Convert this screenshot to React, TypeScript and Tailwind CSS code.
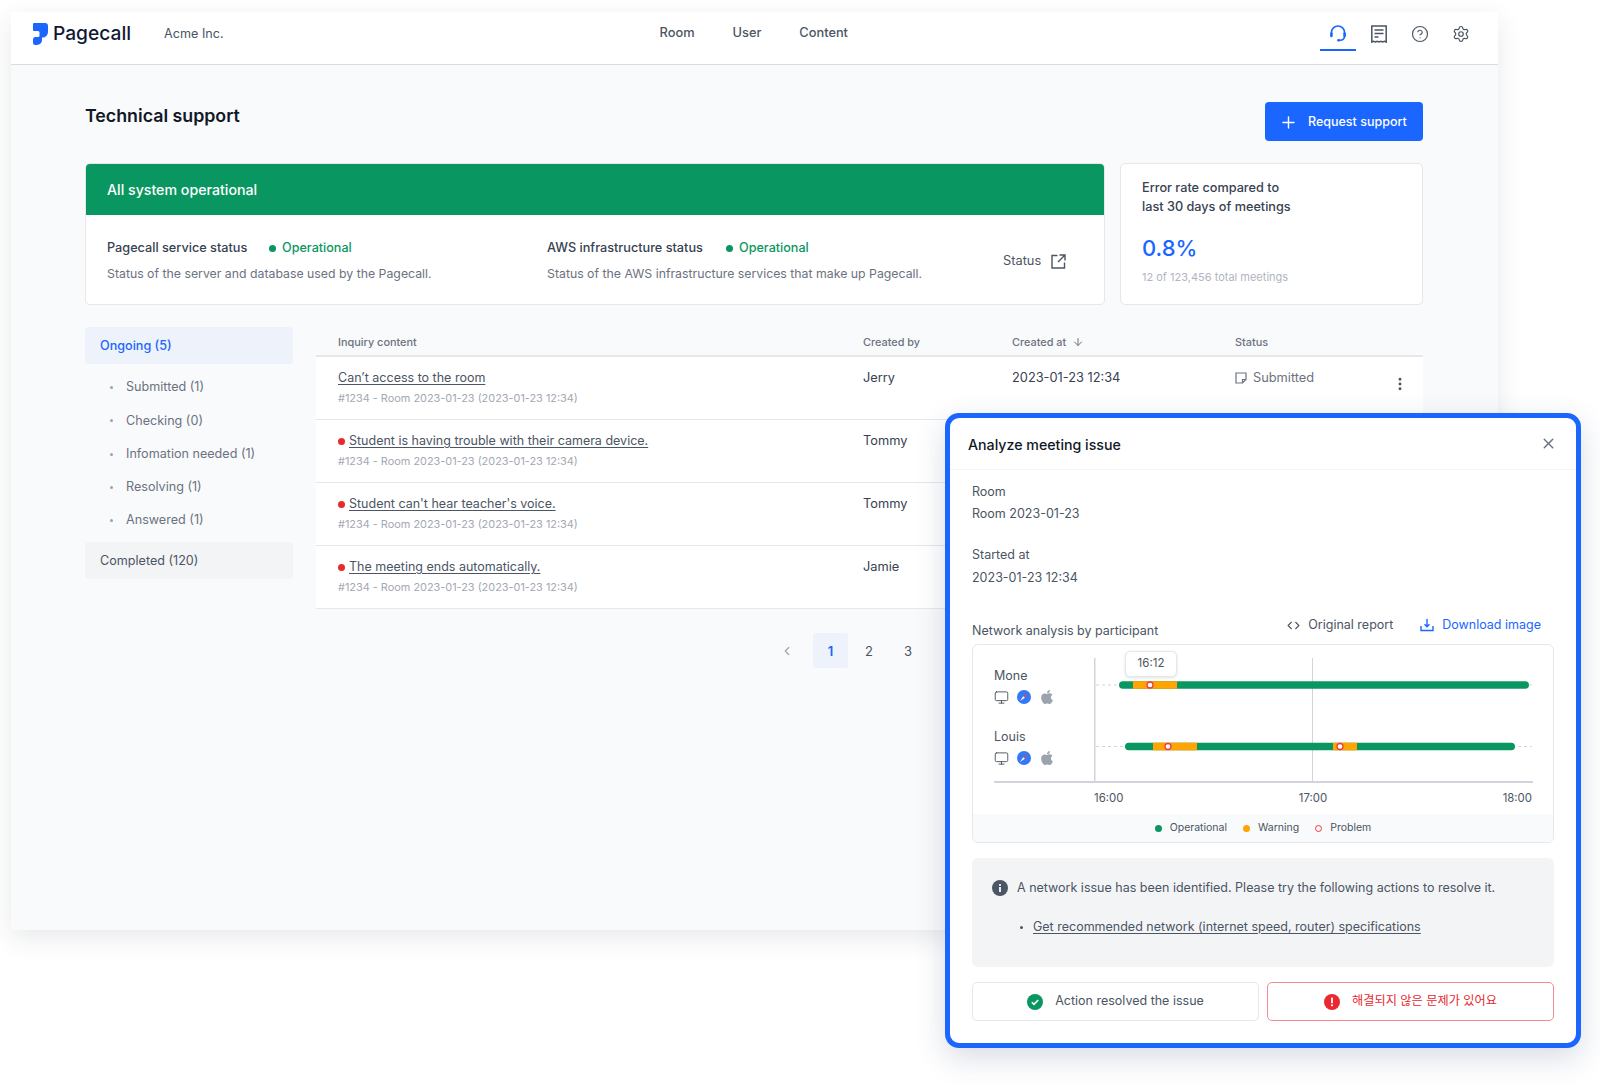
import { ArrowDown, ChevronLeft, ChevronRight, CircleHelp, Code, EllipsisVertical, Monitor, Plus, Settings, X } from "lucide-react";
import { FaApple } from "react-icons/fa";

// only the first row shows its date and status, the panel covers the others
const inquiries = [
  { title: "Can’t access to the room", by: "Jerry", alert: false },
  { title: "Student is having trouble with their camera device.", by: "Tommy", alert: true },
  { title: "Student can't hear teacher's voice.", by: "Tommy", alert: true },
  { title: "The meeting ends automatically.", by: "Jamie", alert: true },
];

const subItems = ["Submitted (1)", "Checking (0)", "Infomation needed (1)", "Resolving (1)", "Answered (1)"];

function Logo() {
  return (
    <svg width="15" height="22" viewBox="0 0 15 22" fill="#1a66ff">
      <path d="M0 1a1 1 0 0 1 1-1H12a3 3 0 0 1 3 3V9a5.5 5.5 0 0 1-5.5 5.5H9V17a5 5 0 0 1-5 5H2.5A2.5 2.5 0 0 1 0 19.5V16.5A2.5 2.5 0 0 1 2.5 14H5a1.5 1.5 0 0 0 1.5-1.5V9.5A1.5 1.5 0 0 0 5 8H1a1 1 0 0 1-1-1Z" />
    </svg>
  );
}

function HeadsetIcon() {
  return (
    <svg width="18" height="18" viewBox="0 0 18 18" fill="none" stroke="#1a66ff" strokeWidth="1.6" strokeLinecap="round">
      <path d="M2.5 10V8.5a6.5 6.5 0 0 1 13 0V10" />
      <path d="M2.4 9.5v2.5M15.6 9.5v2.5" strokeWidth="2.6" />
      <path d="M15.5 12.5a4 4 0 0 1-4.5 3.7" />
      <path d="M9.5 16.2h.4" strokeWidth="2.6" />
    </svg>
  );
}

function ReceiptIcon() {
  return (
    <svg width="18" height="18" viewBox="0 0 18 18" fill="none" stroke="#4b5563" strokeWidth="1.5">
      <path d="M1.8 17V1h14.4v16l-1.8-.8-1.8.8-1.8-.8-1.8.8-1.8-.8-1.8.8-1.8-.8z" />
      <path d="M4.5 5h9M4.5 8.5h9M4.5 12h4" />
    </svg>
  );
}

function ExternalIcon() {
  return (
    <svg width="15" height="15" viewBox="0 0 15 15" fill="none" stroke="#4b5563" strokeWidth="1.4">
      <path d="M6.5 1.5H1v12.5h12.5V8.5" />
      <path d="M8.5 1h5.5v5.5M14 1 7 8" />
    </svg>
  );
}

function NoteIcon() {
  return (
    <svg width="12" height="12" viewBox="0 0 12 12" fill="none" stroke="#6b7280" strokeWidth="1.2">
      <path d="M1 1h10v6.5L7.5 11H1z" />
      <path d="M7.5 11V7.5H11" />
    </svg>
  );
}

function DownloadIcon() {
  return (
    <svg width="14" height="14" viewBox="0 0 14 14" fill="none" stroke="#1a66ff" strokeWidth="1.4">
      <path d="M1 8v4.5h12V8" />
      <path d="M7 1v7.5M4.5 6.2 7 8.7l2.5-2.5" />
    </svg>
  );
}

function SafariIcon() {
  return (
    <svg width="14" height="14" viewBox="0 0 14 14">
      <circle cx="7" cy="7" r="7" fill="#3478f6" />
      <path d="M11 3 6.2 6.2 7.8 7.8z" fill="#ef4444" />
      <path d="M3 11 6.2 6.2 7.8 7.8z" fill="#ffffff" />
    </svg>
  );
}

function InfoIcon() {
  return (
    <svg width="16" height="16" viewBox="0 0 16 16">
      <circle cx="8" cy="8" r="8" fill="#4b5563" />
      <rect x="7.1" y="7" width="1.8" height="5" fill="#ffffff" />
      <rect x="7.1" y="4" width="1.8" height="1.8" fill="#ffffff" />
    </svg>
  );
}

function CheckIcon() {
  return (
    <svg width="16" height="16" viewBox="0 0 16 16" fill="none">
      <circle cx="8" cy="8" r="8" fill="#0a9660" />
      <path d="M4.8 8.2 7 10.4l4.2-4.4" stroke="#ffffff" strokeWidth="1.6" />
    </svg>
  );
}

function AlertIcon() {
  return (
    <svg width="16" height="16" viewBox="0 0 16 16">
      <circle cx="8" cy="8" r="8" fill="#e9282f" />
      <rect x="7.1" y="3.6" width="1.8" height="5.6" fill="#ffffff" />
      <rect x="7.1" y="10.4" width="1.8" height="1.8" fill="#ffffff" />
    </svg>
  );
}

// bars of the network timeline, coordinates are relative to the vertical axis
function TimelineBars() {
  return (
    <svg width="438" height="124" viewBox="0 0 438 124" fill="none">
      <line x1="0.75" y1="0" x2="0.75" y2="124" stroke="#d1d5db" strokeWidth="1.5" />
      <line x1="218.5" y1="0" x2="218.5" y2="124" stroke="#d1d5db" />
      <line x1="2" y1="27" x2="25" y2="27" stroke="#d1d5db" strokeDasharray="3 3" />
      <line x1="435" y1="27" x2="438" y2="27" stroke="#d1d5db" strokeDasharray="3 3" />
      <line x1="2" y1="88.5" x2="31" y2="88.5" stroke="#d1d5db" strokeDasharray="3 3" />
      <line x1="424" y1="88.5" x2="438" y2="88.5" stroke="#d1d5db" strokeDasharray="3 3" />
      <rect x="25" y="23.2" width="410" height="7.6" rx="3.8" fill="#0a9660" />
      <rect x="39" y="23.2" width="44" height="7.6" fill="#ffa400" />
      <circle cx="56" cy="27" r="3" fill="#ffffff" stroke="#f03a45" strokeWidth="1.3" />
      <rect x="31" y="84.7" width="390" height="7.6" rx="3.8" fill="#0a9660" />
      <rect x="59" y="84.7" width="44" height="7.6" fill="#ffa400" />
      <rect x="239" y="84.7" width="24" height="7.6" fill="#ffa400" />
      <circle cx="74" cy="88.5" r="3" fill="#ffffff" stroke="#f03a45" strokeWidth="1.3" />
      <circle cx="246" cy="88.5" r="3" fill="#ffffff" stroke="#f03a45" strokeWidth="1.3" />
    </svg>
  );
}

function Participant({ name }: { name: string }) {
  return (
    <div className="h-[61px]">
      <p className="text-[12.5px] leading-[20px] text-[#4b5563]">{name}</p>
      <div className="mt-[3px] flex items-center gap-[8px]">
        <Monitor size={15} color="#4b5563" strokeWidth={1.5} />
        <SafariIcon />
        <FaApple size={16} color="#9ca3af" />
      </div>
    </div>
  );
}

function AnalyzePanel() {
  return (
    <div className="absolute left-[945px] top-[413px] flex h-[635px] w-[636px] flex-col rounded-[14px] border-[5px] border-[#1a66ff] bg-white shadow-[0_10px_30px_rgba(40,60,110,0.18)]">
      <div className="flex h-[52px] shrink-0 items-center justify-between border-b border-[#f3f4f6] pl-[18px] pr-[19px]">
        <h2 className="mt-[2px] text-[14.2px] font-medium text-[#111827]">Analyze meeting issue</h2>
        <X size={17} color="#6b7280" />
      </div>

      <div className="flex flex-1 flex-col px-[22px] text-[12.5px] text-[#4b5563]">
        <p className="mt-[12px] leading-[20px]">Room</p>
        <p className="mt-[2px] leading-[20px]">Room 2023-01-23</p>
        <p className="mt-[21px] leading-[20px]">Started at</p>
        <p className="mt-[3px] leading-[20px]">2023-01-23 12:34</p>

        <div className="mt-[27px] flex h-[29px] items-start justify-between pr-[13px]">
          <p className="mt-[6px] leading-[20px]">Network analysis by participant</p>
          <div className="flex items-center gap-[27px] leading-[20px]">
            <span className="flex items-center gap-[8px]">
              <Code size={13} color="#4b5563" />
              Original report
            </span>
            <span className="flex items-center gap-[8px] text-[#1a66ff]">
              <DownloadIcon />
              Download image
            </span>
          </div>
        </div>

        <div className="relative flex h-[199px] flex-col overflow-hidden rounded-[6px] border-[1.5px] border-[#e5e7eb]">
          <div className="flex flex-1 pl-[21px] pt-[13px]">
            <div className="w-[100px] shrink-0 pt-[8px]">
              <Participant name="Mone" />
              <Participant name="Louis" />
            </div>
            <div>
              <TimelineBars />
              <div className="flex w-[438px] justify-between pt-[8px] text-[11.4px] leading-[16px] text-[#4b5563]">
                <span>16:00</span>
                <span>17:00</span>
                <span>18:00</span>
              </div>
            </div>
          </div>
          <div className="absolute left-[21px] right-[20px] top-[136px] h-[2px] bg-[#d1d5db]" />
          <div className="absolute left-[152px] top-[6px] flex h-[26px] w-[52px] items-center justify-center rounded-[5px] border border-[#e5e7eb] bg-white text-[11.5px] text-[#4b5563] shadow-[0_1px_3px_rgba(0,0,0,0.12)]">
            16:12
          </div>
          <div className="flex h-[28px] shrink-0 items-center justify-center gap-[16px] bg-[#f9fafb] text-[10.5px] text-[#4b5563]">
            <span className="flex items-center gap-[8px]">
              <span className="h-[7px] w-[7px] rounded-full bg-[#0a9660]" />
              Operational
            </span>
            <span className="flex items-center gap-[8px]">
              <span className="h-[7px] w-[7px] rounded-full bg-[#ffa400]" />
              Warning
            </span>
            <span className="flex items-center gap-[8px]">
              <span className="h-[7px] w-[7px] rounded-full border border-[#f03a45]" />
              Problem
            </span>
          </div>
        </div>

        <div className="mt-[15px] h-[109px] rounded-[6px] bg-[#f3f4f6] pl-[20px] pt-[20px]">
          <div className="flex items-center gap-[9px] leading-[20px]">
            <InfoIcon />
            <span>A network issue has been identified. Please try the following actions to resolve it.</span>
          </div>
          <div className="mt-[19px] flex items-center gap-[10px] pl-[28px] leading-[20px]">
            <span className="h-[3px] w-[3px] rounded-full bg-[#4b5563]" />
            <span className="underline underline-offset-2">Get recommended network (internet speed, router) specifications</span>
          </div>
        </div>

        <div className="mt-[15px] grid h-[39px] grid-cols-2 gap-[8px]">
          <button className="flex items-center justify-center gap-[12px] rounded-[5px] border-[1.5px] border-[#e5e7eb] bg-white text-[#4b5563]">
            <CheckIcon />
            Action resolved the issue
          </button>
          <button className="flex items-center justify-center gap-[12px] rounded-[5px] border-[1.5px] border-[#f8898f] bg-white text-[12.2px] text-[#e9282f]">
            <AlertIcon />
            해결되지 않은 문제가 있어요
          </button>
        </div>
      </div>
    </div>
  );
}

export default function App() {
  return (
    <div className="relative h-[1086px] w-[1600px] overflow-hidden bg-white pl-[11px] pt-[12px] font-['Inter','Noto_Sans_CJK_KR',sans-serif]">
      <div className="h-[918px] w-[1487px] bg-[#f9fafb] shadow-[0_8px_24px_rgba(30,41,59,0.1)]">
        {/* Header */}
        <header className="flex h-[53px] items-center border-b border-[#d9dce1] bg-white pb-[9px]">
          <div className="ml-[22px] flex items-center gap-[5px]">
            <Logo />
            <span className="text-[19.2px] font-medium leading-none text-[#111834]">Pagecall</span>
          </div>
          <span className="ml-[33px] mt-[1px] text-[12.6px] text-[#4b5563]">Acme Inc.</span>
          <nav className="ml-[436px] flex gap-[38px] pb-[2px] text-[12.8px] font-medium text-[#4b5563]">
            <span>Room</span>
            <span>User</span>
            <span>Content</span>
          </nav>
          <div className="ml-auto mr-[28px] flex items-center">
            <div className="flex h-[35px] w-[36px] items-center justify-center border-b-2 border-[#1a66ff]">
              <HeadsetIcon />
            </div>
            <div className="ml-[14px] flex w-[18px] justify-center">
              <ReceiptIcon />
            </div>
            <div className="ml-[23px] flex w-[18px] justify-center">
              <CircleHelp size={18} color="#4b5563" strokeWidth={1.6} />
            </div>
            <div className="ml-[23px] flex w-[18px] justify-center">
              <Settings size={18} color="#4b5563" strokeWidth={1.6} />
            </div>
          </div>
        </header>

        <main className="pl-[74px] pr-[75px]">
          <div className="flex h-[98px] items-start justify-between pt-[37px]">
            <h1 className="mt-[1px] text-[17.8px] font-semibold leading-[26px] text-[#111827]">Technical support</h1>
            <button className="flex h-[39px] w-[158px] items-center gap-[10px] rounded-[4px] bg-[#1a66ff] pl-[14px] pt-[1px] text-[12.5px] font-medium text-white">
              <Plus size={19} strokeWidth={1.8} />
              Request support
            </button>
          </div>

          {/* Status cards */}
          <div className="flex gap-[15px]">
            <section className="h-[142px] w-[1020px] overflow-hidden rounded-[5px] border-[1.5px] border-[#e5e7eb] bg-white">
              <div className="flex h-[51px] items-center bg-[#0a9660] pl-[21px] text-[14.2px] font-medium text-white">
                All system operational
              </div>
              <div className="flex pl-[21px] pt-[23px] text-[12.3px]">
                <div className="w-[440px]">
                  <div className="flex items-center leading-[20px]">
                    <span className="w-[162px] text-[12.7px] font-medium text-[#374151]">Pagecall service status</span>
                    <span className="h-[7px] w-[7px] rounded-full bg-[#0a9660]" />
                    <span className="ml-[6px] text-[12.6px] font-medium text-[#0a9660]">Operational</span>
                  </div>
                  <p className="mt-[6px] leading-[20px] text-[#6b7280]">Status of the server and database used by the Pagecall.</p>
                </div>
                <div className="w-[456px]">
                  <div className="flex items-center leading-[20px]">
                    <span className="w-[179px] text-[12.7px] font-medium text-[#374151]">AWS infrastructure status</span>
                    <span className="h-[7px] w-[7px] rounded-full bg-[#0a9660]" />
                    <span className="ml-[6px] text-[12.6px] font-medium text-[#0a9660]">Operational</span>
                  </div>
                  <p className="mt-[6px] leading-[20px] text-[#6b7280]">Status of the AWS infrastructure services that make up Pagecall.</p>
                </div>
                <div className="flex h-[32px] items-center gap-[10px] pt-[14px] text-[12.8px] text-[#4b5563]">
                  Status
                  <ExternalIcon />
                </div>
              </div>
            </section>

            <section className="h-[142px] w-[303px] rounded-[5px] border-[1.5px] border-[#e5e7eb] bg-white pl-[21px] pt-[15px]">
              <p className="text-[12.7px] font-medium leading-[18.5px] text-[#374151]">
                Error rate compared to
                <br />
                last 30 days of meetings
              </p>
              <p className="mt-[16px] text-[22px] font-medium leading-[32px] text-[#1a66ff]">0.8%</p>
              <p className="mt-[5px] text-[11px] leading-[16px] text-[#b0b5bf]">12 of 123,456 total meetings</p>
            </section>
          </div>

          <div className="mt-[22px] flex gap-[23px]">
            {/* Sidebar */}
            <aside className="w-[208px] shrink-0 text-[12.6px]">
              <div className="flex h-[37px] items-center rounded-[4px] bg-[#edf2fb] pl-[15px] pt-[2px] font-medium text-[#1a66ff]">Ongoing (5)</div>
              <ul className="mb-[5px] mt-[7px]">
                {subItems.map((item) => (
                  <li key={item} className="flex h-[33.3px] items-center gap-[13px] pl-[25px] text-[#6b7280]">
                    <span className="h-[3px] w-[3px] rounded-full bg-[#9ca3af]" />
                    {item}
                  </li>
                ))}
              </ul>
              <div className="flex h-[37px] items-center rounded-[4px] bg-[#f3f4f6] pl-[15px] text-[#4b5563]">Completed (120)</div>
            </aside>

            {/* Inquiry table */}
            <div className="flex-1">
              <div className="grid h-[30px] grid-cols-[525px_149px_223px_1fr] items-center border-b-2 border-[#e5e7eb] pl-[22px] pt-[2px] text-[10.9px] font-medium text-[#6b7280]">
                <span>Inquiry content</span>
                <span>Created by</span>
                <span className="flex items-center gap-[6px]">
                  Created at <ArrowDown size={12} />
                </span>
                <span>Status</span>
              </div>
              {inquiries.map((row) => (
                <div key={row.title} className="grid h-[63px] grid-cols-[525px_149px_223px_1fr] border-b-[1.5px] border-[#e5e7eb] bg-white pl-[22px] pt-[11px]">
                  <div>
                    <div className="flex items-center gap-[4px] text-[12.5px] leading-[20px] text-[#4b5563]">
                      {row.alert && <span className="h-[7px] w-[7px] rounded-full bg-[#e9282f]" />}
                      <span className="underline underline-offset-2">{row.title}</span>
                    </div>
                    <p className="text-[10.9px] leading-[20px] text-[#a3a8b2]">#1234 - Room 2023-01-23 (2023-01-23 12:34)</p>
                  </div>
                  <span className="text-[12.8px] leading-[20px] text-[#374151]">{row.by}</span>
                  {!row.alert && (
                    <>
                      <span className="text-[12.8px] leading-[20px] text-[#374151]">2023-01-23 12:34</span>
                      <div className="flex items-start justify-between pr-[15px]">
                        <span className="flex items-center gap-[6px] text-[12.8px] leading-[20px] text-[#6b7280]">
                          <NoteIcon />
                          Submitted
                        </span>
                        <EllipsisVertical size={16} color="#4b5563" strokeWidth={2.4} className="mt-[8px]" />
                      </div>
                    </>
                  )}
                </div>
              ))}
              <div className="mt-[24px] flex h-[35px] items-center pl-[464px] text-[13px] text-[#4b5563]">
                <ChevronLeft size={14} color="#9ca3af" />
                <span className="ml-[19px] flex h-[35px] w-[35px] items-center justify-center rounded-[3px] bg-[#edf2fb] pt-[2px] font-semibold text-[#1a66ff]">1</span>
                <span className="ml-[17px] mt-[2px]">2</span>
                <span className="ml-[31px] mt-[2px]">3</span>
              </div>
            </div>
          </div>
        </main>
      </div>

      <AnalyzePanel />
    </div>
  );
}
